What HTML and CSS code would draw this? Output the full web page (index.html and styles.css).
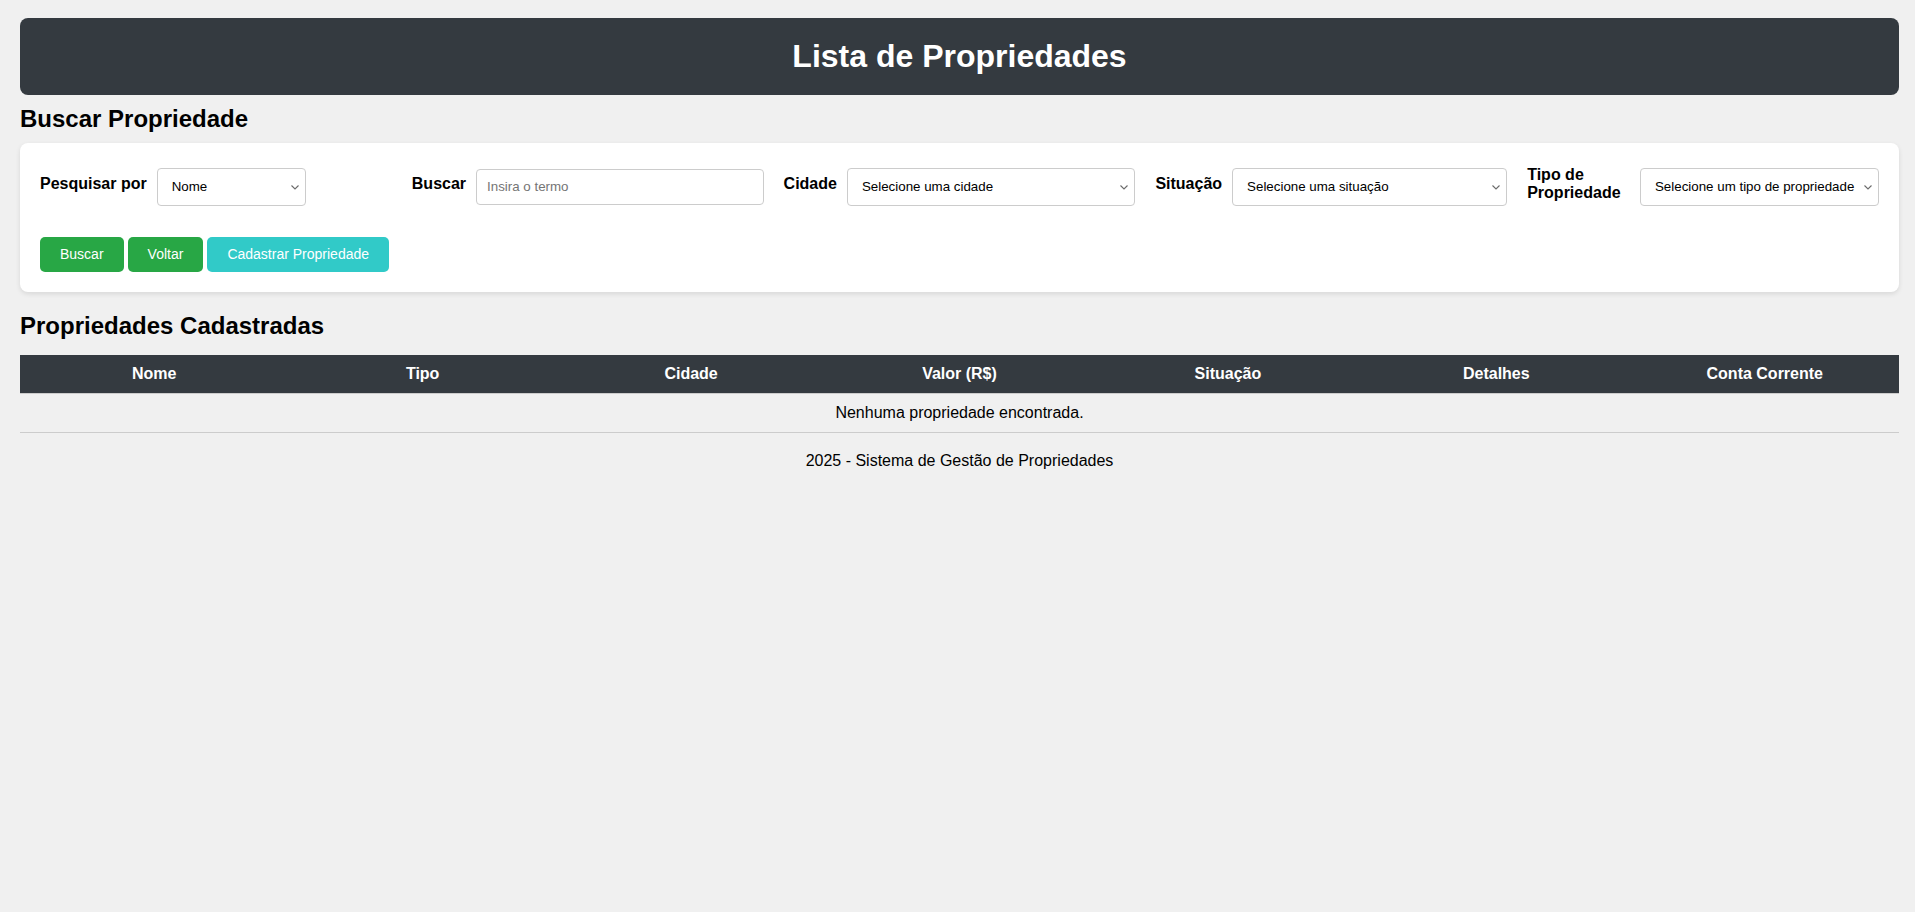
FILE: index.html
```html
<!DOCTYPE html>
<html lang="pt-BR">
<head>
<meta charset="utf-8">
<title>Lista de Propriedades</title>
<link rel="stylesheet" href="styles.css">
</head>
<body>
<header class="page-header">
  <h1>Lista de Propriedades</h1>
</header>

<h2 class="section-title">Buscar Propriedade</h2>
<section class="search-card">
  <div class="filters">
    <div class="group">
      <label>Pesquisar por</label>
      <span class="sel-wrap wrap-by">
        <select class="ctl">
          <option>Nome</option>
          <option>Tipo de Propriedade</option>
        </select>
        <svg class="chev" viewBox="0 0 8 5" width="8" height="5"><path d="M0.5 0.5 L4 4 L7.5 0.5" fill="none" stroke="#6b6b6b" stroke-width="1.1"/></svg>
      </span>
    </div>
    <div class="group">
      <label>Buscar</label>
      <input class="ctl ctl-input grow" type="text" placeholder="Insira o termo">
    </div>
    <div class="group">
      <label>Cidade</label>
      <span class="sel-wrap grow">
        <select class="ctl">
          <option>Selecione uma cidade</option>
        </select>
        <svg class="chev" viewBox="0 0 8 5" width="8" height="5"><path d="M0.5 0.5 L4 4 L7.5 0.5" fill="none" stroke="#6b6b6b" stroke-width="1.1"/></svg>
      </span>
    </div>
    <div class="group">
      <label>Situação</label>
      <span class="sel-wrap grow">
        <select class="ctl">
          <option>Selecione uma situação</option>
        </select>
        <svg class="chev" viewBox="0 0 8 5" width="8" height="5"><path d="M0.5 0.5 L4 4 L7.5 0.5" fill="none" stroke="#6b6b6b" stroke-width="1.1"/></svg>
      </span>
    </div>
    <div class="group">
      <label>Tipo de Propriedade</label>
      <span class="sel-wrap wrap-type">
        <select class="ctl">
          <option>Selecione um tipo de propriedade</option>
        </select>
        <svg class="chev" viewBox="0 0 8 5" width="8" height="5"><path d="M0.5 0.5 L4 4 L7.5 0.5" fill="none" stroke="#6b6b6b" stroke-width="1.1"/></svg>
      </span>
    </div>
  </div>
  <div class="actions">
    <button class="btn btn-green">Buscar</button>
    <button class="btn btn-green">Voltar</button>
    <button class="btn btn-teal">Cadastrar Propriedade</button>
  </div>
</section>

<h2 class="section-title list-title">Propriedades Cadastradas</h2>
<table class="props">
  <thead>
    <tr>
      <th>Nome</th>
      <th>Tipo</th>
      <th>Cidade</th>
      <th>Valor (R$)</th>
      <th>Situação</th>
      <th>Detalhes</th>
      <th>Conta Corrente</th>
    </tr>
  </thead>
  <tbody>
    <tr>
      <td colspan="7">Nenhuma propriedade encontrada.</td>
    </tr>
  </tbody>
</table>

<footer class="page-footer">2025 - Sistema de Gestão de Propriedades</footer>
</body>
</html>
```

FILE: styles.css
```css
html, body {
  margin: 0;
  background: #f0f0f0;
}

body {
  padding: 18px 16px 20px 20px;
  font-family: "Liberation Sans", Arial, sans-serif;
  font-size: 16px;
  color: #000;
}

.page-header {
  background: #343a40;
  color: #fff;
  border-radius: 8px;
  padding: 20px;
  text-align: center;
}

.page-header h1 {
  margin: 0;
  font-size: 32px;
  font-weight: bold;
}

.section-title {
  font-size: 24px;
  font-weight: bold;
  margin: 10px 0;
}

.search-card {
  background: #fff;
  border-radius: 8px;
  box-shadow: 0 2px 5px rgba(0, 0, 0, 0.1);
  padding: 23px 20px 20px 20px;
  margin-bottom: 20px;
}

.filters {
  display: flex;
  gap: 20px;
}

.group {
  flex: 1 1 0;
  min-width: 0;
  display: flex;
  align-items: center;
  gap: 10px;
}

.group label {
  flex: 0 1 auto;
  font-weight: bold;
  margin-bottom: 5px;
}

.ctl {
  box-sizing: border-box;
  font-family: "Liberation Sans", Arial, sans-serif;
  font-size: 13.333px;
  color: #000;
  background: #fff;
  border: 1px solid #ccc;
  border-radius: 4px;
  height: 38px;
  min-width: 0;
}

.ctl-input {
  height: 36px;
  padding: 0 10px;
}

.ctl-input::placeholder {
  color: #757575;
}

.sel-wrap {
  position: relative;
  display: flex;
  min-width: 0;
}

.sel-wrap select {
  -webkit-appearance: none;
  appearance: none;
  width: 100%;
  padding: 0 20px 0 14px;
}

.chev {
  position: absolute;
  right: 7px;
  top: 17px;
  pointer-events: none;
}

.grow {
  flex: 1 1 0;
}

.wrap-by {
  flex: 0 0 149px;
}

.wrap-type {
  flex: 0 0 239px;
}

.actions {
  display: flex;
  gap: 4px;
  margin-top: 30px;
}

.btn {
  font-family: "Liberation Sans", Arial, sans-serif;
  font-size: 14px;
  line-height: 15px;
  color: #fff;
  border: none;
  border-radius: 5px;
  padding: 10px 20px;
  cursor: pointer;
}

.btn-green {
  background: #28a745;
}

.btn-teal {
  background: #31cac8;
}

.list-title {
  margin: 0 0 15px 0;
}

.props {
  width: 100%;
  border-collapse: collapse;
  table-layout: fixed;
}

.props th,
.props td {
  padding: 10px;
  text-align: center;
  border-bottom: 1px solid #ccc;
}

.props th {
  background: #343a40;
  color: #fff;
  font-weight: bold;
}

.page-footer {
  margin-top: 19px;
  text-align: center;
}
```
